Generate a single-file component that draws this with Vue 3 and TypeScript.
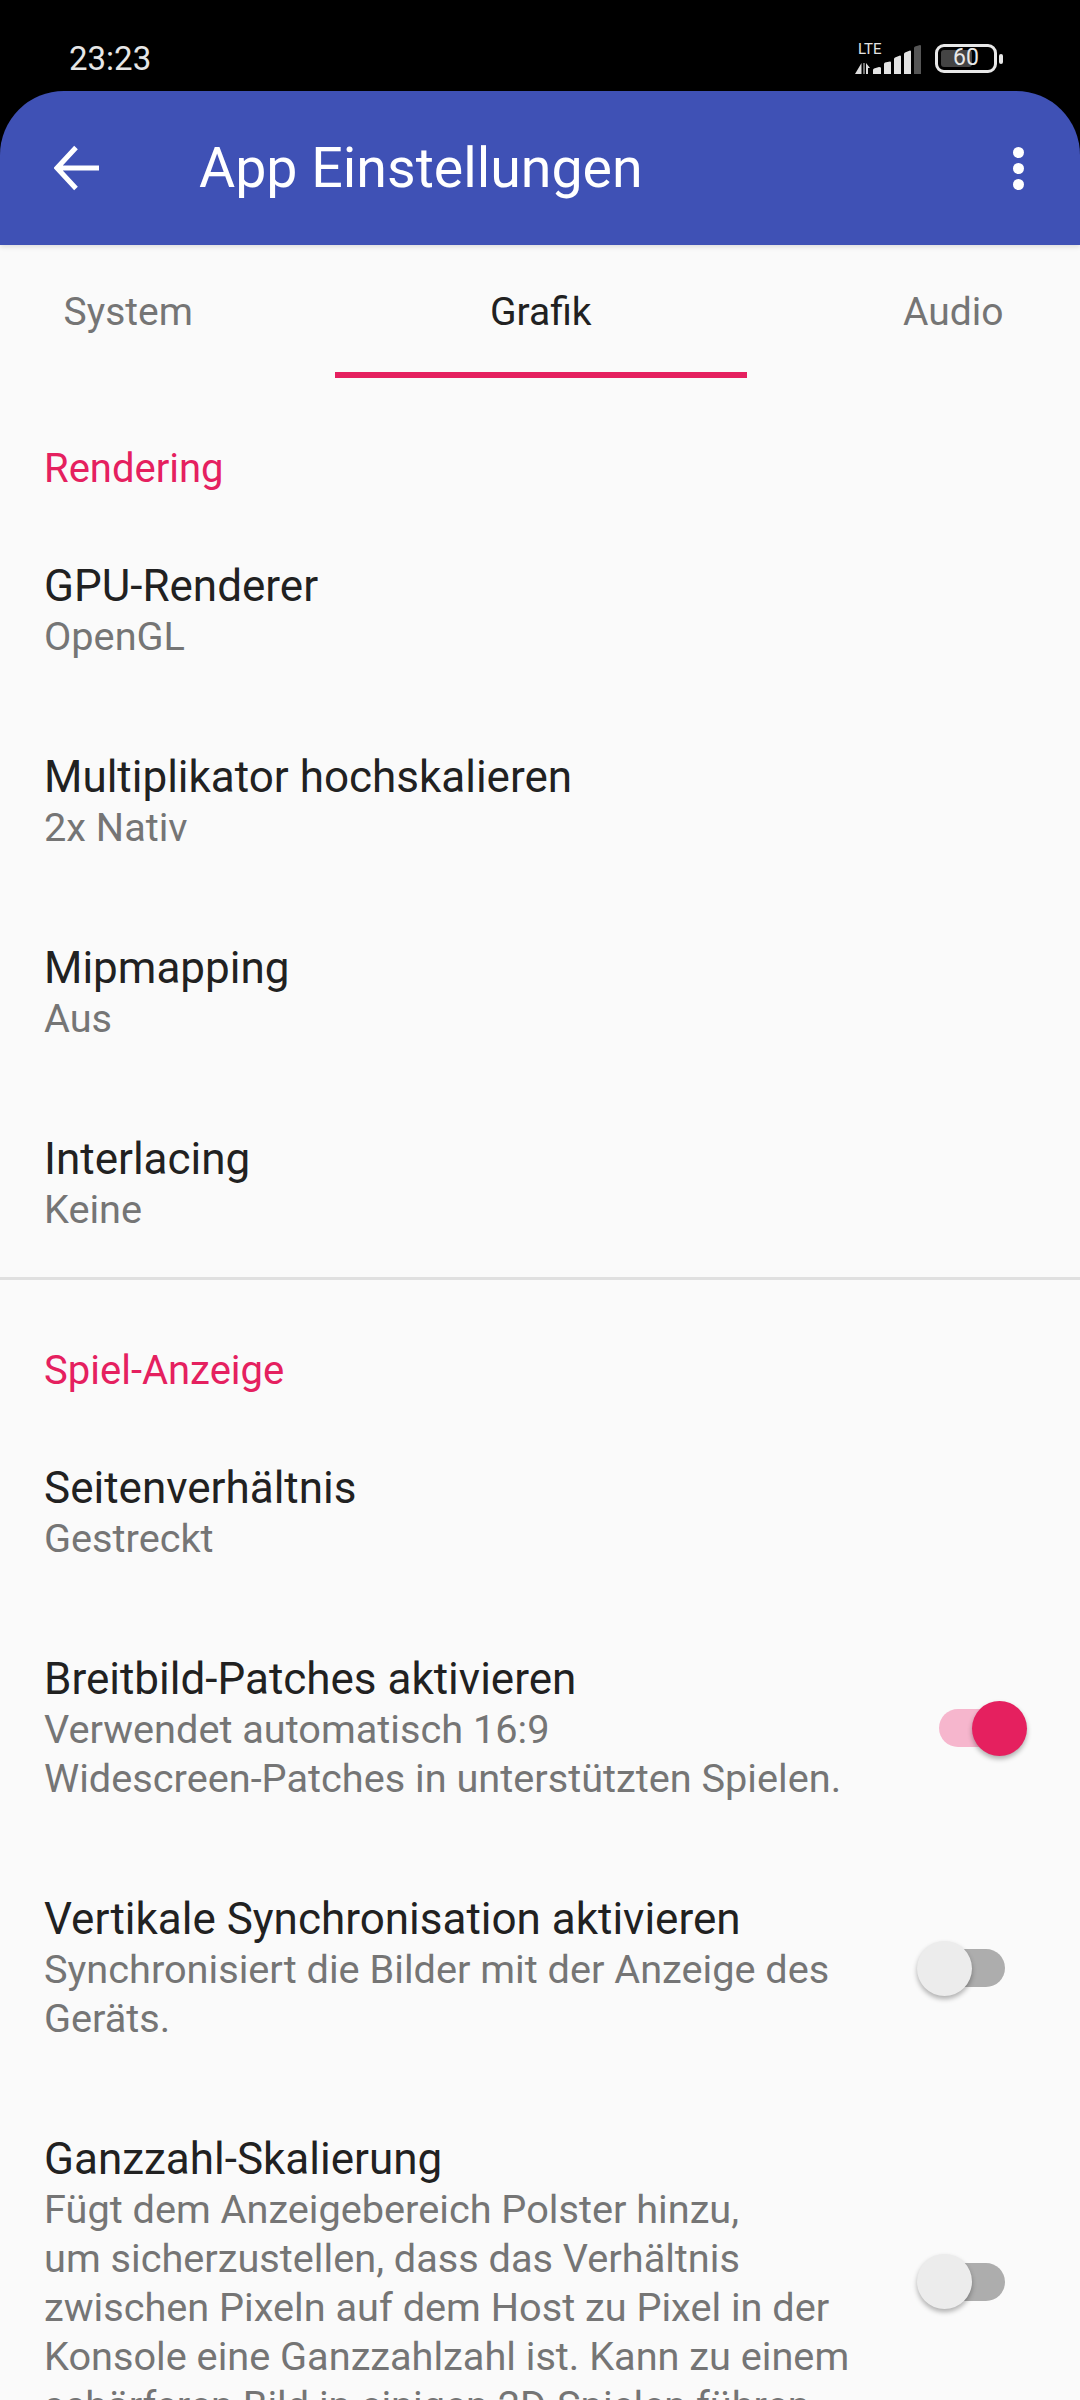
<script setup lang="ts">
interface Pref {
  title: string;
  summary: string[];
  toggle?: "on" | "off";
}

const tabs = ["System", "Grafik", "Audio"];

const rendering: Pref[] = [
  { title: "GPU-Renderer", summary: ["OpenGL"] },
  { title: "Multiplikator hochskalieren", summary: ["2x Nativ"] },
  { title: "Mipmapping", summary: ["Aus"] },
  { title: "Interlacing", summary: ["Keine"] },
];

const display: Pref[] = [
  { title: "Seitenverhältnis", summary: ["Gestreckt"] },
  {
    title: "Breitbild-Patches aktivieren",
    summary: ["Verwendet automatisch 16:9", "Widescreen-Patches in unterstützten Spielen."],
    toggle: "on",
  },
  {
    title: "Vertikale Synchronisation aktivieren",
    summary: ["Synchronisiert die Bilder mit der Anzeige des", "Geräts."],
    toggle: "off",
  },
  {
    title: "Ganzzahl-Skalierung",
    summary: [
      "Fügt dem Anzeigebereich Polster hinzu,",
      "um sicherzustellen, dass das Verhältnis",
      "zwischen Pixeln auf dem Host zu Pixel in der",
      "Konsole eine Ganzzahlzahl ist. Kann zu einem",
      "schärferen Bild in einigen 2D-Spielen führen.",
    ],
    toggle: "off",
  },
];

const sections = [
  { name: "Rendering", items: rendering },
  { name: "Spiel-Anzeige", items: display },
];
</script>

<template>
  <div class="screen">
    <div class="status">
      <span class="clock">23:23</span>
      <div class="status-icons">
        <svg class="signal" width="70" height="38" viewBox="0 -6 70 38">
          <text x="7" y="10" class="lte">LTE</text>
          <path d="M10.500 19v11H4zM12.500 30V19h1v11zM15 19l4 5-2 0v6h-2z" fill="#ddd" />
          <path d="M22 30v-4q0-1 1-1.500l5-1.500q2 0 2 1v6zM33 30V20q0-1 1-1.500l5-1q1 0 1 1V30zM43 30V15q0-1 1-1.500l5-2q1 0 1 1V30zM53 30V10q0-1 1-1.500l5-2q1 0 1 1V30z" fill="#e4e4e4" />
          <path d="M63 30V4q0-1 1-1.500l5-1.500q1 0 1 1v28z" fill="#555" />
        </svg>
        <div class="battery">
          <div class="battery-fill"></div>
          <span class="battery-text">60</span>
        </div>
        <div class="battery-nub"></div>
      </div>
    </div>

    <header class="appbar">
      <svg class="back" width="46" height="46" viewBox="0 0 46 46">
        <path d="M45 23H3M22 2.500 3 23l19 20.500" fill="none" stroke="#fff" stroke-width="5" />
      </svg>
      <h1 class="title">App Einstellungen</h1>
      <div class="more">
        <i></i>
        <i></i>
        <i></i>
      </div>
    </header>

    <div class="body">
      <nav class="tabs">
        <div v-for="tab in tabs" :key="tab" class="tab" :class="{ active: tab === 'Grafik' }">{{ tab }}</div>
      </nav>

      <main class="list">
        <section v-for="(section, i) in sections" :key="section.name" class="section" :class="{ ruled: i > 0 }">
          <h2 class="section-name">{{ section.name }}</h2>
          <div v-for="item in section.items" :key="item.title" class="pref">
            <div class="pref-text">
              <div class="pref-title">{{ item.title }}</div>
              <div v-for="line in item.summary" :key="line" class="pref-summary">{{ line }}</div>
            </div>
            <div v-if="item.toggle" class="switch" :class="item.toggle">
              <div class="thumb"></div>
            </div>
          </div>
        </section>
      </main>
    </div>
  </div>
</template>

<style>
html,
body {
  margin: 0;
  background: #fafafa;
}
</style>

<style scoped>
.screen {
  width: 1080px;
  height: 2400px;
  overflow: hidden;
  background: #000;
  font-family: Roboto, "Noto Sans", sans-serif;
}
.status {
  height: 91px;
  display: flex;
  justify-content: space-between;
  align-items: flex-start;
  padding: 0 77px 0 69px;
  box-sizing: border-box;
}
.clock {
  margin-top: 41px;
  color: #e6e6e6;
  font-size: 33px;
  line-height: 36px;
}
.status-icons {
  display: flex;
  align-items: flex-start;
  margin-top: 44px;
}
.signal {
  margin: -6px 14px 0 0;
}
.lte {
  font-family: Roboto, sans-serif;
  font-size: 15px;
  fill: #e4e4e4;
}
.battery {
  width: 62px;
  height: 29px;
  box-sizing: border-box;
  border: 3.500px solid #e8e8e8;
  border-radius: 9px;
  position: relative;
}
.battery-fill {
  position: absolute;
  left: 3px;
  top: 3px;
  bottom: 3px;
  width: 31px;
  background: #444;
  border-radius: 3px;
}
.battery-text {
  position: absolute;
  left: 0;
  right: 0;
  top: -1px;
  text-align: center;
  color: #e8e8e8;
  font-size: 23px;
  line-height: 24px;
}
.battery-nub {
  width: 4px;
  height: 10px;
  margin: 10px 0 0 2px;
  border-radius: 2px;
  background: #e8e8e8;
}
.appbar {
  height: 154px;
  position: relative;
  z-index: 1;
  display: flex;
  align-items: center;
  padding: 0 56px 0 54px;
  background: #3f51b5;
  border-radius: 64px 64px 0 0;
  box-shadow: 0 2px 5px rgba(0, 0, 0, 0.12);
}
.title {
  margin: 0 0 0 99px;
  flex: 1;
  color: #fff;
  font-size: 55.500px;
  font-weight: 400;
}
.more {
  display: flex;
  flex-direction: column;
  gap: 5px;
}
.more i {
  width: 11px;
  height: 11px;
  border-radius: 50%;
  background: #fff;
}
.body {
  height: 2155px;
  background: #fafafa;
}
.tabs {
  height: 133px;
  display: flex;
  margin-left: -78px;
}
.tab {
  flex: 0 0 412.500px;
  box-sizing: border-box;
  display: flex;
  align-items: center;
  justify-content: center;
  padding-top: 6px;
  border-bottom: 6px solid transparent;
  color: #757575;
  font-size: 39px;
}
.tab.active {
  color: #212121;
  border-bottom-color: #e5205f;
}
.section {
  padding-top: 66px;
}
.section.ruled {
  margin-top: 43px;
  border-top: 3px solid #e0e0e0;
  padding-top: 66px;
}
.section-name {
  margin: 0 0 66px 44px;
  color: #e5205f;
  font-size: 40px;
  font-weight: 400;
  line-height: 50px;
}
.pref {
  display: flex;
  align-items: center;
  justify-content: space-between;
  padding: 0 0 90px 44px;
}
.pref:last-child {
  padding-bottom: 0;
}
.pref-title {
  color: #212121;
  font-size: 44px;
  line-height: 52px;
}
.pref-summary {
  color: #757575;
  font-size: 39.700px;
  line-height: 49px;
}
.switch {
  width: 66px;
  height: 38px;
  margin-right: 75px;
  flex: none;
  position: relative;
  border-radius: 19px;
  background: #adadad;
}
.switch.on {
  background: #f6b6cd;
}
.thumb {
  position: absolute;
  top: -8.500px;
  left: -22px;
  width: 55px;
  height: 55px;
  border-radius: 50%;
  background: #ececec;
  box-shadow: 0 3px 5px rgba(0, 0, 0, 0.3);
}
.on .thumb {
  left: 33px;
  background: #e5205f;
}
</style>
